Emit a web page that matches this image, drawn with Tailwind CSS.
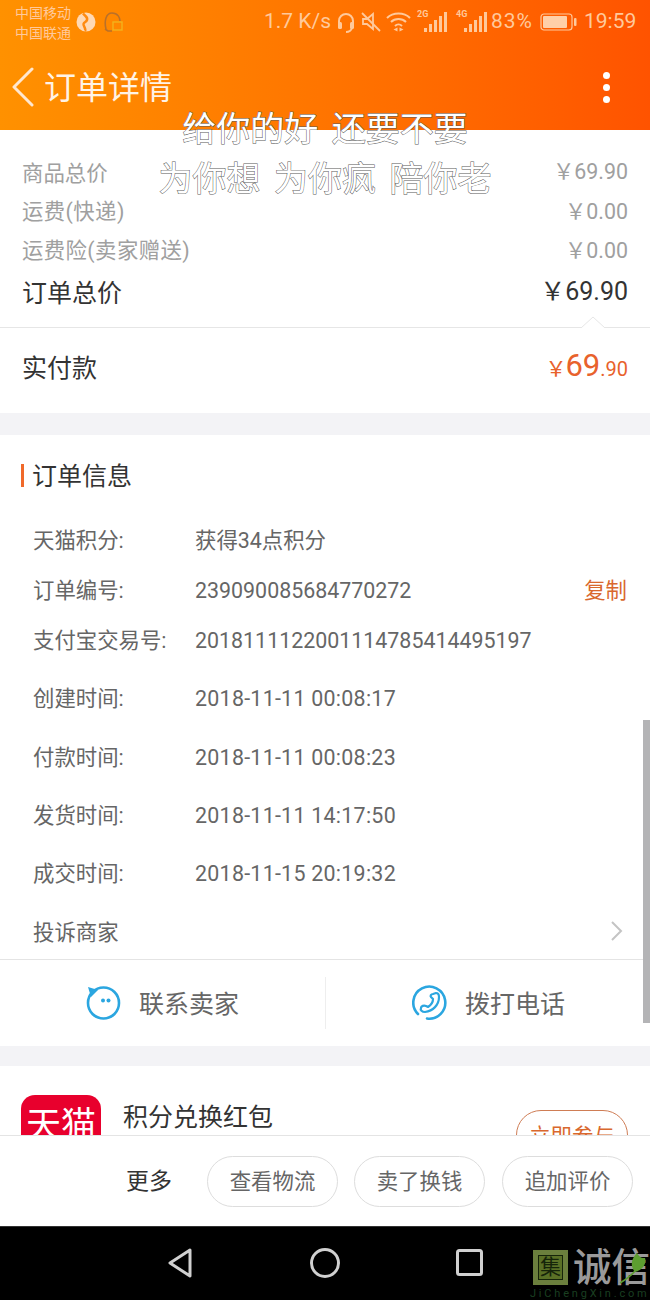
<!DOCTYPE html>
<html lang="zh-CN">
<head>
    <meta charset="UTF-8">
    <meta name="viewport" content="width=device-width, initial-scale=1.0">
    <title>订单详情</title>
    <script src="https://cdn.jsdelivr.net/npm/@tailwindcss/browser@4"></script>
</head>
<body class="bg-white font-['Roboto','Noto_Sans_CJK_SC',sans-serif] [font-kerning:none]">
<div class="relative w-[650px] h-[1300px] overflow-hidden flex flex-col">

    <!-- Header -->
    <header class="h-[130px] shrink-0 bg-gradient-to-r from-[#ff9100] to-[#ff5300]">
        <!-- Status bar -->
        <div class="h-[44px] flex items-center text-[#ffc99b]">
            <div class="ml-[15px] w-[60px] text-[14px] leading-[20px] pt-[1px]">
                <div>中国移动</div>
                <div>中国联通</div>
            </div>
            <svg class="ml-[1px]" width="20" height="20" viewBox="0 0 20 20">
                <circle cx="10" cy="10" r="9.500" fill="#ffd9b5"/>
                <path d="M7 1.500C10 5 12 5 11 8S6 10 8 14s1 5 1 5" stroke="#ff8a10" stroke-width="2.500" fill="none"/>
            </svg>
            <svg class="ml-[7px]" width="20" height="22" viewBox="0 0 20 22" fill="none">
                <path d="M3 18C1 10 3 2 9 2s8 5 8 8" stroke="#b9702a" stroke-width="1.600"/>
                <path d="M2 18l3 2h4" stroke="#b9702a" stroke-width="1.600"/>
                <rect x="10" y="11" width="9" height="8" stroke="#f3b31c" stroke-width="1.400"/>
            </svg>
            <div class="ml-[141px] w-[66px] text-[21px] whitespace-nowrap">1.7 K/s</div>
            <svg class="ml-[6px]" width="20" height="22" viewBox="0 0 20 22" fill="none" stroke="#ffc99b" stroke-width="2">
                <path d="M3 14V10a7 7 0 0 1 14 0v4"/>
                <rect x="2" y="11" width="4" height="7" rx="1.500" fill="#ffc99b" stroke="none"/>
                <rect x="14" y="11" width="4" height="7" rx="1.500" fill="#ffc99b" stroke="none"/>
                <path d="M16 17c-1 3-3 4-6 4"/>
            </svg>
            <svg class="ml-[5px]" width="20" height="20" viewBox="0 0 20 20" fill="none" stroke="#ffc99b" stroke-width="1.800">
                <path d="M1 7h4l6-5v15l-6-5H1z" transform="translate(1 0)"/>
                <path d="M1 1l18 18"/>
            </svg>
            <svg class="ml-[5px]" width="25" height="20" viewBox="0 0 25 20" fill="none" stroke="#ffc99b" stroke-width="2">
                <path d="M1 6c6-6 17-6 23 0"/>
                <path d="M5 10c4-4 11-4 15 0"/>
                <path d="M9 14c2-2 5-2 7 0"/>
                <path d="M11.500 15.500v4l-4-2zM13.500 15.500v4l4-2z" fill="#ffc99b" stroke="none"/>
            </svg>
            <div class="relative ml-[5px] w-[32px] h-[22px]">
                <span class="absolute left-[1px] top-[-3px] text-[9px] font-bold">2G</span>
                <svg class="absolute left-[8px] top-[1px]" width="24" height="20" viewBox="0 0 24 20" fill="#ffc99b">
                    <rect x="0" y="16" width="3" height="4"/><rect x="5" y="12" width="3" height="8"/><rect x="10" y="8" width="3" height="12"/><rect x="15" y="4" width="3" height="16"/><rect x="20" y="0" width="3" height="20"/>
                </svg>
            </div>
            <div class="relative ml-[7px] w-[33px] h-[22px]">
                <span class="absolute left-[1px] top-[-3px] text-[9px] font-bold">4G</span>
                <svg class="absolute left-[9px] top-[1px]" width="24" height="20" viewBox="0 0 24 20" fill="#ffc99b">
                    <rect x="0" y="16" width="3" height="4"/><rect x="5" y="12" width="3" height="8"/><rect x="10" y="8" width="3" height="12"/><rect x="15" y="4" width="3" height="16"/><rect x="20" y="0" width="3" height="20"/>
                </svg>
            </div>
            <div class="ml-[3px] w-[42px] text-[21px] tracking-[1px]">83%</div>
            <svg class="ml-[7px]" width="37" height="18" viewBox="0 0 37 18">
                <rect x="1" y="1" width="31" height="16" rx="3" fill="none" stroke="#ffc99b" stroke-width="1.200"/>
                <rect x="3" y="3" width="24" height="12" rx="1" fill="#ffd0a8"/>
                <rect x="34" y="5" width="2.500" height="8" rx="1" fill="#ffc99b"/>
            </svg>
            <div class="ml-[7px] text-[21px]">19:59</div>
        </div>
        <!-- Title bar -->
        <div class="relative h-[86px] flex items-center">
            <svg class="ml-[11px]" width="24" height="40" viewBox="0 0 24 40" fill="none" stroke="#ffe7cf" stroke-width="3" stroke-linecap="round" stroke-linejoin="round">
                <path d="M21 2L3 20l18 18"/>
            </svg>
            <h1 class="ml-[9px] mt-[2px] text-[32px] leading-none text-[#fff3e6] font-normal">订单详情</h1>
            <div class="ml-auto mr-[40px] flex flex-col gap-[5px]">
                <span class="size-[7px] rounded-full bg-white"></span>
                <span class="size-[7px] rounded-full bg-white"></span>
                <span class="size-[7px] rounded-full bg-white"></span>
            </div>
        </div>
    </header>

    <!-- Scroll area -->
    <main class="flex-1 overflow-hidden">
        <!-- Prices -->
        <section class="pt-[25px] text-[#a0a0a0] text-[21.4px]">
            <div class="h-[38px] px-[22px] flex items-center justify-between"><span>商品总价</span><span class="-mt-[3px]">￥69.90</span></div>
            <div class="h-[39px] px-[22px] flex items-center justify-between"><span class="tracking-[0.4px]">运费(快递)</span><span>￥0.00</span></div>
            <div class="h-[39px] px-[22px] flex items-center justify-between"><span class="tracking-[0.4px]">运费险(卖家赠送)</span><span>￥0.00</span></div>
            <div class="h-[46px] px-[22px] flex items-center justify-between text-[25px] text-[#333]"><span>订单总价</span><span class="-mt-[4px]">￥69.90</span></div>
            <div class="relative h-[10px] border-b border-[#e6e6e6] box-content">
                <svg class="absolute right-[45px] top-[-1px]" width="24" height="12" viewBox="0 0 24 12" fill="white" stroke="#e6e6e6">
                    <path d="M0 12L12 1l12 11"/>
                </svg>
            </div>
            <div class="h-[85px] pb-[4px] px-[22px] flex items-center justify-between text-[25px] text-[#333]">
                <span>实付款</span>
                <span class="-mt-[4px] flex items-baseline text-[#e8622c] text-[20px]"><span class="text-[21px]">￥</span><span class="text-[31px] -ml-[1px]">69</span><span>.90</span></span>
            </div>
        </section>
        <div class="h-[22px] bg-[#f3f3f6]"></div>

        <!-- Order info -->
        <section class="text-[21.4px] text-[#666]">
            <div class="h-[81px] flex items-center">
                <span class="ml-[21px] w-[3px] h-[23px] bg-[#f0692a]"></span>
                <h2 class="ml-[8px] mt-[3px] text-[25px] text-[#333] font-normal">订单信息</h2>
            </div>
            <div class="h-[50px] pl-[33px] flex items-center"><span class="w-[162px] shrink-0">天猫积分:</span><span>获得34点积分</span></div>
            <div class="h-[50px] pl-[33px] pr-[23px] flex items-center"><span class="w-[162px] shrink-0">订单编号:</span><span>239090085684770272</span><span class="ml-auto text-[#d9682e]">复制</span></div>
            <div class="h-[50px] pl-[33px] flex items-center"><span class="w-[162px] shrink-0">支付宝交易号:</span><span>2018111122001114785414495197</span></div>
            <div class="h-[58px] mt-[4px] pl-[33px] flex items-center"><span class="w-[162px] shrink-0">创建时间:</span><span class="tracking-[0.27px]">2018-11-11 00:08:17</span></div>
            <div class="h-[59px] pt-[1px] pl-[33px] flex items-center"><span class="w-[162px] shrink-0">付款时间:</span><span class="tracking-[0.27px]">2018-11-11 00:08:23</span></div>
            <div class="h-[58px] pl-[33px] flex items-center"><span class="w-[162px] shrink-0">发货时间:</span><span class="tracking-[0.27px]">2018-11-11 14:17:50</span></div>
            <div class="h-[58px] pl-[33px] flex items-center"><span class="w-[162px] shrink-0">成交时间:</span><span class="tracking-[0.27px]">2018-11-15 20:19:32</span></div>
            <div class="h-[52px] pt-[4px] pl-[33px] pr-[27px] flex items-center justify-between border-b border-[#e4e4e4] box-content">
                <span>投诉商家</span>
                <svg class="-mt-[4px]" width="13" height="22" viewBox="0 0 13 22" fill="none" stroke="#c4c4c4" stroke-width="2"><path d="M2 2l9 9-9 9"/></svg>
            </div>
        </section>

        <!-- Contact -->
        <section class="h-[86px] flex items-center text-[25px] text-[#666]">
            <div class="w-[325px] flex items-center">
                <svg class="ml-[85px]" width="38" height="38" viewBox="0 0 38 38" fill="none" stroke="#2ba6e0" stroke-width="2.600">
                    <circle cx="18.500" cy="19" r="15.500"/>
                    <path d="M3 3l10 3-7 7z" fill="#2ba6e0" stroke="none"/>
                    <circle cx="18" cy="16.500" r="2" fill="#2ba6e0" stroke="none"/>
                    <circle cx="23.500" cy="16.500" r="2" fill="#2ba6e0" stroke="none"/>
                </svg>
                <span class="ml-[16px] mt-[4px]">联系卖家</span>
            </div>
            <div class="w-[1px] h-[52px] bg-[#eeeeee]"></div>
            <div class="flex items-center">
                <svg class="ml-[86px]" width="36" height="36" viewBox="0 0 36 36" fill="none" stroke="#2ba6e0" stroke-width="2.600" stroke-linecap="round">
                    <path d="M6 29A16 16 0 1 1 15 33.500"/>
                    <path d="M21 9l3-1c2 0 3 2 3 4 0 8-6 14-14 15-3 0-5-2-4-4 0-2 3-3 5-2l2 1c3-2 5-5 5-8l-2-2c-1-1 0-3 2-3z" stroke-width="2.200" stroke-linejoin="round"/>
                </svg>
                <span class="ml-[17px] mt-[4px]">拨打电话</span>
            </div>
        </section>
        <div class="h-[20px] bg-[#f3f3f6]"></div>

        <!-- Promo, cut off by the bottom bar -->
        <section class="relative pt-[29px] pl-[21px] pr-[22px] flex items-start">
            <div class="w-[80px] h-[80px] shrink-0 rounded-[14px] bg-[#e8002d] text-white text-[35px] leading-none text-center pt-[13px]">天猫</div>
            <div class="ml-[22px] mt-[4px] text-[25px] text-[#333]">积分兑换红包</div>
            <div class="ml-auto mt-[15px] w-[112px] h-[50px] rounded-full border border-[#cf7d55] text-[21.4px] text-[#d9682e] text-center leading-[48px] pt-[2px]">立即参与</div>
        </section>
    </main>

    <!-- Bottom actions -->
    <div class="h-[91px] shrink-0 bg-white border-t border-[#e4e4e4] flex items-center justify-end gap-[16px] pr-[17px] text-[21.4px] text-[#666]">
        <span class="mr-[19px] mt-[2px] text-[23px] text-[#333]">更多</span>
        <button class="w-[131px] h-[51px] pt-[2px] rounded-full border border-[#dddddd]">查看物流</button>
        <button class="w-[131px] h-[51px] pt-[2px] rounded-full border border-[#dddddd]">卖了换钱</button>
        <button class="ml-[1px] w-[131px] h-[51px] pt-[2px] rounded-full border border-[#dddddd]">追加评价</button>
    </div>

    <!-- Nav bar -->
    <nav class="h-[74px] shrink-0 bg-black border-t border-[#333] flex items-center justify-center pb-[2px] pl-[4px]">
        <svg width="26" height="32" viewBox="0 0 26 32" fill="none" stroke="#d0d0d0" stroke-width="3" stroke-linejoin="round" class="mr-[117px] -ml-[4px]">
            <path d="M23 3L3 16l20 13z"/>
        </svg>
        <svg width="30" height="30" viewBox="0 0 30 30" fill="none" stroke="#d0d0d0" stroke-width="3"><circle cx="15" cy="15" r="13.500"/></svg>
        <svg width="27" height="27" viewBox="0 0 27 27" fill="none" stroke="#d0d0d0" stroke-width="3" class="ml-[116px]"><rect x="1.500" y="1.500" width="24" height="24" rx="2"/></svg>
    </nav>

    <!-- Lyrics overlay -->
    <div class="absolute left-0 right-0 top-[104px] text-center text-[34px] leading-[50px] text-white [-webkit-text-stroke:1px_#5a5a5a] [paint-order:stroke_fill] [word-spacing:5px] pointer-events-none">
        <div>给你的好 还要不要</div>
        <div>为你想 为你疯 陪你老</div>
    </div>

    <!-- Scrollbar -->
    <div class="absolute left-[643px] top-[720px] w-[7px] h-[303px] bg-[#b4b4b6]"></div>

    <!-- Watermark -->
    <div class="absolute left-[533px] top-[1250px] w-[35px] h-[35px] bg-[#6b7f3d] flex items-center justify-center">
        <span class="w-[25px] h-[25px] border border-[#16240a] bg-[#5a7026] text-[#16240a] text-[21px] leading-[23px] text-center">集</span>
    </div>
    <div class="absolute left-[573px] top-[1249px] text-[38.500px] leading-[38px] font-medium text-[#9a9a9a] whitespace-nowrap">诚信</div>
    <svg class="absolute left-[618px] top-[1252px]" width="30" height="34" viewBox="0 0 30 34">
        <path d="M19 1c-6 6-7 13-2 19 8-2 12-9 10-14-3 0-5 0-8-5z" fill="#5d9e30"/>
        <path d="M17 19C12 25 7 28 2 31" stroke="#5d9e30" stroke-width="1.500" fill="none"/>
    </svg>
    <div class="absolute left-[530px] top-[1288px] text-[11px] leading-[12px] tracking-[2.800px] text-[#1a3f20] whitespace-nowrap">JiChengXin.com</div>
</div>
</body>
</html>
